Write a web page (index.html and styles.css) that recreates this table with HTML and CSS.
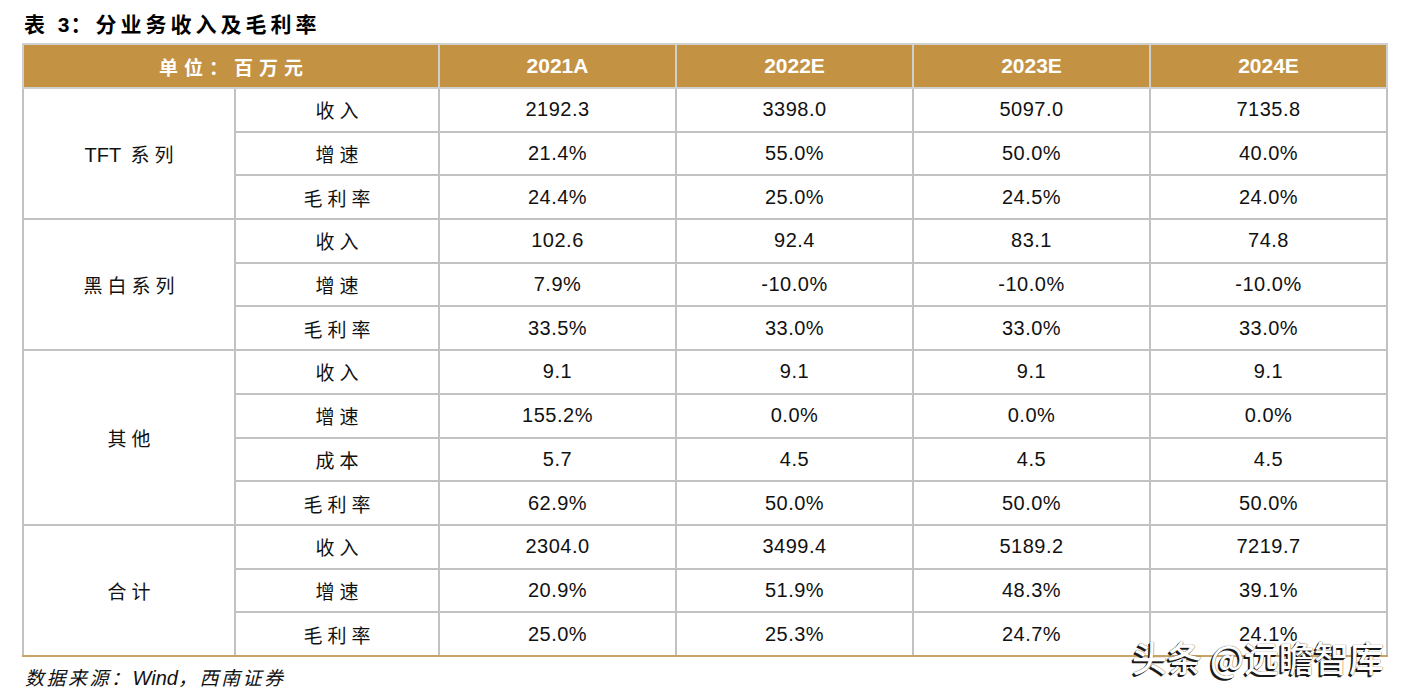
FILE: index.html
```html
<!DOCTYPE html>
<html lang="zh">
<head>
<meta charset="utf-8">
<title>表 3：分业务收入及毛利率</title>
<link rel="stylesheet" href="styles.css">
</head>
<body>
<div class="page">
  <h1 class="title">表 <span class="num">3</span>：分业务收入及毛利率</h1>
  <table class="data">
    <colgroup>
      <col class="c1"><col class="c2"><col class="c3"><col class="c3"><col class="c3"><col class="c3">
    </colgroup>
    <thead>
      <tr>
        <th colspan="2" class="unit">单位：百万元</th>
        <th>2021A</th><th>2022E</th><th>2023E</th><th>2024E</th>
      </tr>
    </thead>
    <tbody>
      <tr><td rowspan="3" class="grp"><span class="lat">TFT</span> 系列</td><td class="lbl">收入</td><td>2192.3</td><td>3398.0</td><td>5097.0</td><td>7135.8</td></tr>
      <tr><td class="lbl">增速</td><td>21.4%</td><td>55.0%</td><td>50.0%</td><td>40.0%</td></tr>
      <tr><td class="lbl">毛利率</td><td>24.4%</td><td>25.0%</td><td>24.5%</td><td>24.0%</td></tr>
      <tr><td rowspan="3" class="grp">黑白系列</td><td class="lbl">收入</td><td>102.6</td><td>92.4</td><td>83.1</td><td>74.8</td></tr>
      <tr><td class="lbl">增速</td><td>7.9%</td><td>-10.0%</td><td>-10.0%</td><td>-10.0%</td></tr>
      <tr><td class="lbl">毛利率</td><td>33.5%</td><td>33.0%</td><td>33.0%</td><td>33.0%</td></tr>
      <tr><td rowspan="4" class="grp">其他</td><td class="lbl">收入</td><td>9.1</td><td>9.1</td><td>9.1</td><td>9.1</td></tr>
      <tr><td class="lbl">增速</td><td>155.2%</td><td>0.0%</td><td>0.0%</td><td>0.0%</td></tr>
      <tr><td class="lbl">成本</td><td>5.7</td><td>4.5</td><td>4.5</td><td>4.5</td></tr>
      <tr><td class="lbl">毛利率</td><td>62.9%</td><td>50.0%</td><td>50.0%</td><td>50.0%</td></tr>
      <tr><td rowspan="3" class="grp">合计</td><td class="lbl">收入</td><td>2304.0</td><td>3499.4</td><td>5189.2</td><td>7219.7</td></tr>
      <tr><td class="lbl">增速</td><td>20.9%</td><td>51.9%</td><td>48.3%</td><td>39.1%</td></tr>
      <tr class="last"><td class="lbl">毛利率</td><td>25.0%</td><td>25.3%</td><td>24.7%</td><td>24.1%</td></tr>
    </tbody>
  </table>
  <p class="source">数据来源：<span class="lat">Wind</span>，西南证券</p>
  <div class="watermark">头条 @远瞻智库</div>
</div>
</body>
</html>
```

FILE: styles.css
```css
* { box-sizing: border-box; }
html, body {
  margin: 0;
  padding: 0;
  background: #ffffff;
}
body {
  font-family: "Liberation Sans", Arial, "Noto Sans CJK SC", sans-serif;
  color: #111;
}
.page {
  position: relative;
  width: 1410px;
  height: 700px;
  padding: 9px 0 0 22px;
}
.title {
  margin: 0 0 0 2px;
  height: 34px;
  font-family: "Noto Sans CJK SC", sans-serif;
  font-size: 21px;
  font-weight: 700;
  letter-spacing: 4px;
  line-height: 28px;
  color: #000;
}
.title .num {
  font-family: "Liberation Sans", Arial, sans-serif;
  letter-spacing: 1px;
}
.data {
  border-collapse: collapse;
  table-layout: fixed;
  width: 1364px;
}
.c1 { width: 212px; }
.c2 { width: 204px; }
.c3 { width: 237px; }
.data th, .data td {
  border: 2px solid #c2c2c2;
  text-align: center;
  vertical-align: middle;
  padding: 0;
}
.data thead th {
  height: 44px;
  background: #c49243;
  color: #fff;
  font-family: "Liberation Sans", Arial, sans-serif;
  font-weight: 700;
  font-size: 21px;
  border-color: #cfcfcf;
}
.data thead th.unit {
  font-family: "Noto Sans CJK SC", sans-serif;
  font-size: 19px;
  letter-spacing: 6px;
  padding-left: 6px;
}
.data td {
  height: 43.7px;
  font-size: 20px;
  letter-spacing: 0.5px;
  color: #111;
}
.data td.lbl, .data td.grp {
  font-family: "Noto Sans CJK SC", sans-serif;
  font-size: 19px;
  font-weight: 400;
  letter-spacing: 5px;
  padding-left: 5px;
}
.data td.grp .lat {
  font-family: "Liberation Sans", Arial, sans-serif;
  font-size: 20px;
  letter-spacing: 0;
}
.data tbody tr:last-child td,
.data tbody tr:nth-last-child(3) td.grp {
  border-bottom: 2px solid #c9a468;
}
.source {
  margin: 6px 0 0 3px;
  font-family: "Noto Sans CJK SC", sans-serif;
  font-style: italic;
  font-size: 19px;
  letter-spacing: 2.5px;
  color: #111;
}
.source .lat {
  font-family: "Liberation Sans", Arial, sans-serif;
  font-size: 20px;
  letter-spacing: 0;
}
.watermark {
  position: absolute;
  left: 1132px;
  top: 635px;
  font-family: "Noto Sans CJK SC", sans-serif;
  font-size: 35px;
  font-weight: 500;
  line-height: 44px;
  color: #ffffff;
  text-shadow: -2px 2px 0 #1a1a1a, -1px 1px 0 #333, 0 0 1px #000;
  white-space: nowrap;
}
```
